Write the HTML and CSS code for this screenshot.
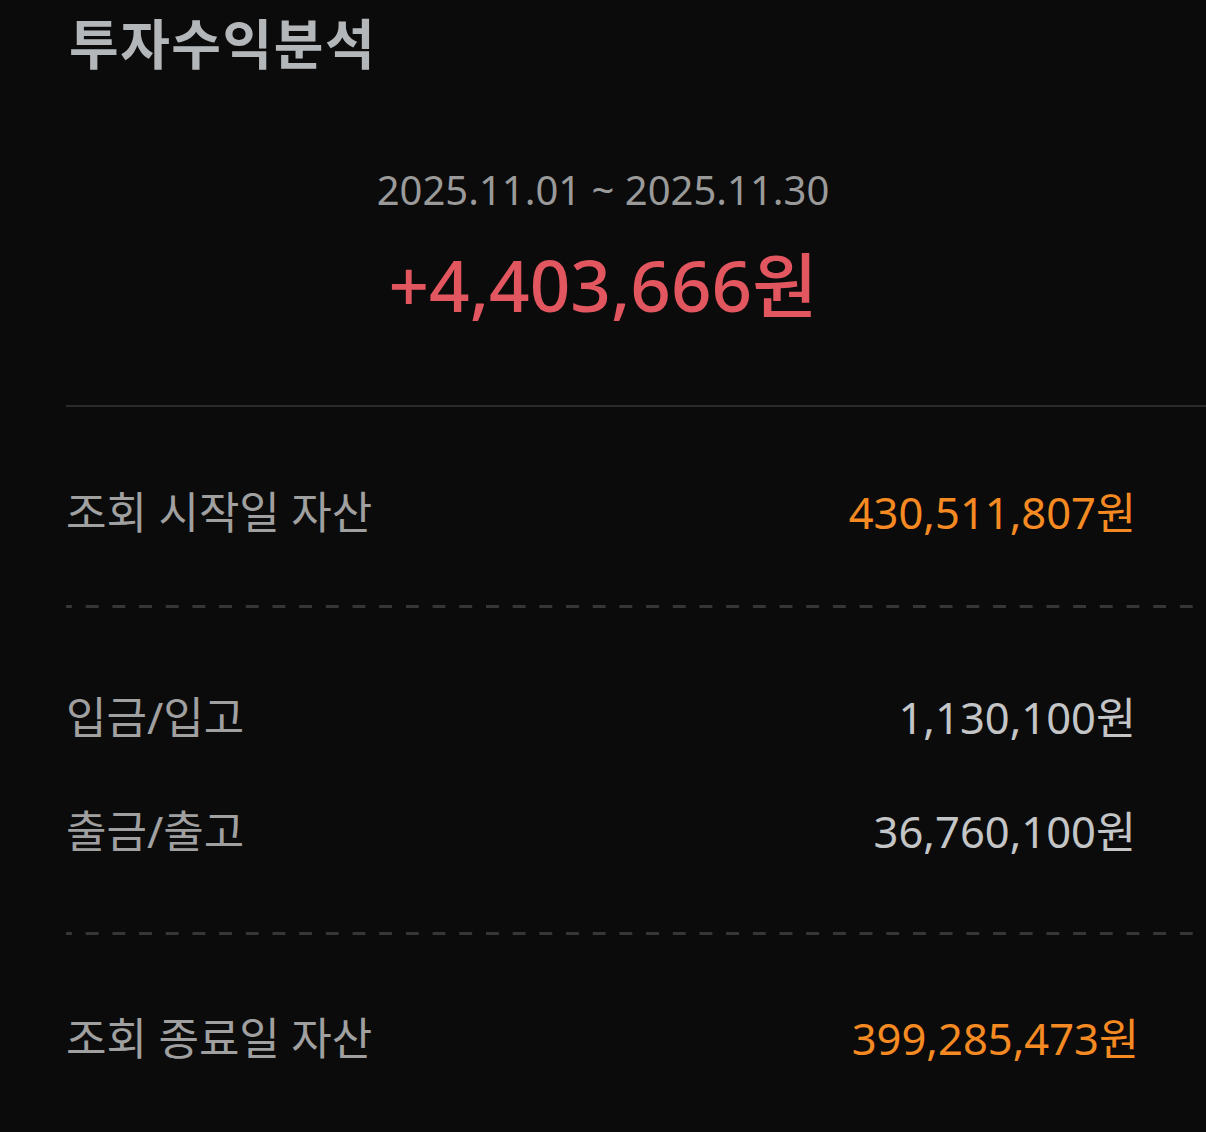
FILE: index.html
```html
<!DOCTYPE html>
<html lang="ko">
  <head>
    <meta charset="UTF-8" />
    <meta name="viewport" content="width=device-width, initial-scale=1.0" />
    <title>투자수익분석</title>
    <link rel="stylesheet" href="styles.css">
  </head>
  <body>
    <header class="page-header">
      <h1>투자수익분석</h1>
    </header>

    <section class="summary">
      <p class="period">2025.11.01 ~ 2025.11.30</p>
      <p class="profit">+4,403,666원</p>
    </section>

    <main class="detail">
      <div class="block first">
        <div class="row">
          <span class="label">조회 시작일 자산</span>
          <span class="value highlight">430,511,807원</span>
        </div>
      </div>

      <div class="block middle">
        <div class="row">
          <span class="label">입금/입고</span>
          <span class="value">1,130,100원</span>
        </div>
        <div class="row">
          <span class="label">출금/출고</span>
          <span class="value">36,760,100원</span>
        </div>
      </div>

      <div class="block last">
        <div class="row">
          <span class="label">조회 종료일 자산</span>
          <span class="value highlight">399,285,473원</span>
        </div>
      </div>
    </main>
  </body>
</html>
```

FILE: styles.css
```css
      body {
        margin: 0;
        background-color: #0b0b0b;
        font-family: "Noto Sans", "Noto Sans CJK KR", sans-serif;
        color: #a0a0a0;
      }

      p {
        margin: 0;
      }

      .page-header {
        padding-left: 69px;
      }

      .page-header h1 {
        margin: 0;
        font-size: 54px;
        line-height: 88px;
        font-weight: 700;
        color: #b4b7ba;
        letter-spacing: 1.5px;
      }

      .summary {
        text-align: center;
        padding: 77px 0 75px 0;
      }

      .period {
        font-size: 40px;
        line-height: 50px;
        color: #9a9a9a;
      }

      .profit {
        margin-top: 25px;
        font-size: 71px;
        line-height: 90px;
        font-weight: 500;
        color: #e2575f;
      }

      .detail {
        margin-left: 66px;
        border-top: 2px solid #2b2b2b;
      }

      .block {
        display: flex;
        flex-direction: column;
        gap: 64px;
      }

      .block.first {
        padding: 78px 70px 73px 0;
      }

      .block.middle {
        padding: 82px 70px 81px 0;
      }

      .block.last {
        padding: 76px 67px 70px 0;
      }

      /* dashed separator */
      .block.first,
      .block.middle {
        background-image: linear-gradient(to right, #363636 13px, transparent 13px);
        background-size: 26.7px 3px;
        background-position: -7px 100%;
        background-repeat: repeat-x;
      }

      .row {
        display: flex;
        justify-content: space-between;
        align-items: center;
        height: 50px;
      }

      .label {
        font-size: 44px;
        color: #a0a0a0;
      }

      .value {
        font-size: 43.5px;
        color: #c3c5c7;
      }

      .value.highlight {
        color: #f58a22;
      }
```
